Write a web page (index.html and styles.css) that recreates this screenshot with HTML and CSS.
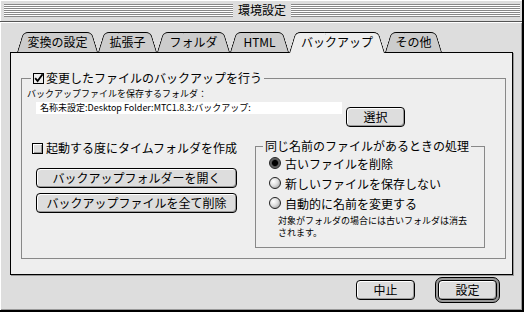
FILE: index.html
```html
<!DOCTYPE html>
<html lang="ja">
<head>
    <meta charset="UTF-8">
    <title>環境設定</title>
    <link rel="stylesheet" href="styles.css">
</head>
<body>
    <div class="window">
        <div class="titlebar">
            <div class="stripes"></div>
            <div class="title">環境設定</div>
            <div class="stripes"></div>
        </div>

        <div class="content">
            <div class="tabs">
                <div class="tab">変換の設定</div>
                <div class="tab">拡張子</div>
                <div class="tab">フォルダ</div>
                <div class="tab">HTML</div>
                <div class="tab active">バックアップ</div>
                <div class="tab">その他</div>
            </div>

            <div class="panel">
                <fieldset class="group">
                    <legend class="legend">
                        <span class="check">
                            <svg width="11" height="11" viewBox="0 0 11 11">
                                <rect x="0.5" y="0.5" width="10" height="10" fill="#eee" stroke="#000"/>
                                <path d="M2.2 5.2 L4.6 8 L9.6 1.2" fill="none" stroke="#000" stroke-width="1.8"/>
                            </svg>
                        </span>
                        変更したファイルのバックアップを行う
                    </legend>

                    <div class="path-label">バックアップファイルを保存するフォルダ：</div>
                    <div class="path-row">
                        <div class="path-field">名称未設定:Desktop Folder:MTC1.8.3:バックアップ:</div>
                        <button class="btn btn-select">選択</button>
                    </div>

                    <div class="lower">
                        <div class="left-col">
                            <label class="option">
                                <span class="box"></span>
                                起動する度にタイムフォルダを作成
                            </label>
                            <button class="btn btn-wide first">バックアップフォルダーを開く</button>
                            <button class="btn btn-wide">バックアップファイルを全て削除</button>
                        </div>

                        <fieldset class="group inner">
                            <legend class="legend inner-legend">同じ名前のファイルがあるときの処理</legend>
                            <div class="radio-row"><span class="radio on"></span>古いファイルを削除</div>
                            <div class="radio-row"><span class="radio"></span>新しいファイルを保存しない</div>
                            <div class="radio-row"><span class="radio"></span>自動的に名前を変更する</div>
                            <p class="note">対象がフォルダの場合には古いフォルダは消去<br>されます。</p>
                        </fieldset>
                    </div>
                </fieldset>
            </div>

            <div class="footer">
                <button class="btn btn-small">中止</button>
                <div class="default-ring">
                    <button class="btn btn-small">設定</button>
                </div>
            </div>
        </div>
    </div>
</body>
</html>
```

FILE: styles.css
```css
* {
    box-sizing: border-box;
}

body {
    margin: 0;
    background-color: #fff;
    font-family: "Noto Sans CJK JP", "Noto Sans", sans-serif;
    font-size: 12px;
    color: #000;
}

.window {
    width: 524px;
    height: 312px;
    border-right: 2px solid #000;
    border-bottom: 2px solid #000;
    background-color: #ddd;
}

/* Title bar with the striped drag area */
.titlebar {
    height: 22px;
    display: flex;
    align-items: center;
    padding: 0 2px 1px 4px;
    border-bottom: 1px solid #555;
    box-shadow: inset 1px 1px 0 #fff;
}

.stripes {
    flex: 1;
    height: 13px;
    background: repeating-linear-gradient(to bottom, #888 0 1px, #fff 1px 2px);
}

.title {
    padding: 0 5px;
    line-height: 14px;
}

.content {
    height: 288px;
    padding: 10px 0 0 10px;
    box-shadow: inset 1px 1px 0 #fff, inset -1px -1px 0 #999;
}

/* Tabs */
.tabs {
    display: flex;
    align-items: flex-start;
    height: 20px;
    margin-left: 7px;
}

.tab {
    position: relative;
    z-index: 0;
    height: 20px;
    display: flex;
    align-items: center;
    justify-content: center;
    line-height: 14px;
}

.tab::before,
.tab::after {
    content: "";
    position: absolute;
    top: 0;
    bottom: 0;
    width: 55%;
    z-index: -1;
    background-color: #ccc;
    border: 1px solid #000;
    border-bottom: none;
}

.tab::before {
    left: 0;
    border-right: none;
    border-top-left-radius: 5px;
    transform: skewX(-17deg);
    transform-origin: bottom left;
}

.tab::after {
    right: 0;
    border-left: none;
    border-top-right-radius: 5px;
    transform: skewX(17deg);
    transform-origin: bottom right;
}

.tab:nth-child(1) { width: 81px; }
.tab:nth-child(2) { width: 59px; }
.tab:nth-child(3) { width: 73px; }
.tab:nth-child(4) { width: 59px; }
.tab:nth-child(5) { width: 96px; }
.tab:nth-child(6) { width: 57px; }

.tab.active {
    z-index: 1;
    height: 21px;
    padding-bottom: 1px;
}

.tab.active::before,
.tab.active::after {
    background-color: #eee;
}

/* Tab panel */
.panel {
    width: 503px;
    height: 223px;
    display: flex;
    flex-direction: column;
    padding: 18px 6px 15px 10px;
    background-color: #eee;
    border: 1px solid #000;
    box-shadow: 1px 1px 0 #999;
}

.group {
    flex: 1;
    margin: 0;
    padding: 0;
    min-width: 0;
    border: 1px solid #888;
}

.legend {
    display: flex;
    align-items: center;
    gap: 2px;
    margin-left: 9px;
    padding: 0 2px;
    line-height: 14px;
}

.check {
    display: flex;
    width: 11px;
    height: 11px;
}

.path-label {
    margin: 3px 0 0 5px;
    font-size: 9px;
    line-height: 11px;
}

.path-row {
    display: flex;
    align-items: flex-start;
    margin-top: 3px;
}

.path-field {
    width: 306px;
    height: 12px;
    margin-left: 14px;
    padding-left: 4px;
    background-color: #fff;
    font-size: 9px;
    line-height: 12px;
    white-space: nowrap;
}

/* Push buttons */
.btn {
    height: 20px;
    padding: 0;
    border: 1px solid #000;
    border-radius: 4px;
    background-color: #ddd;
    box-shadow: inset 1px 1px 0 #fff, inset -1px -1px 0 #999;
    font-family: inherit;
    font-size: 12px;
    line-height: 16px;
    color: #000;
}

.btn-select {
    width: 59px;
    margin: 5px 0 0 4px;
}

.btn-wide {
    width: 201px;
    margin: 5px 0 0 14px;
}

.btn-wide.first {
    margin-top: 13px;
}

.btn-small {
    width: 59px;
}

/* Lower part: option, actions and the duplicate-name group */
.lower {
    display: flex;
    align-items: flex-start;
    margin-top: 12px;
}

.left-col {
    width: 233px;
    display: flex;
    flex-direction: column;
    align-items: flex-start;
}

.option {
    display: flex;
    align-items: center;
    gap: 3px;
    margin: 2px 0 0 10px;
    line-height: 14px;
}

.box {
    width: 11px;
    height: 11px;
    border: 1px solid #000;
    background-color: #ddd;
    box-shadow: inset 1px 1px 0 #fff, inset -1px -1px 0 #999;
}

.group.inner {
    flex: none;
    width: 230px;
    height: 109px;
}

.inner-legend {
    margin-left: 7px;
}

.radio-row {
    display: flex;
    align-items: center;
    gap: 4px;
    height: 20px;
    padding-left: 13px;
}

.radio {
    width: 12px;
    height: 12px;
    border-radius: 50%;
    border: 1px solid #222;
    background: radial-gradient(circle at 35% 35%, #fff 0, #ddd 45%, #8a8a8a 100%);
}

.radio.on {
    background: radial-gradient(circle, #000 0 2.6px, #555 3.6px, #999 100%);
}

.note {
    margin: 2px 0 0 22px;
    font-size: 9px;
    line-height: 12px;
}

/* Dialog buttons */
.footer {
    display: flex;
    justify-content: flex-end;
    align-items: center;
    gap: 20px;
    margin-top: 2px;
    padding-right: 22px;
}

.default-ring {
    display: flex;
    padding: 2px;
    border: 1px solid #000;
    border-radius: 7px;
    background-color: #999;
}
```
